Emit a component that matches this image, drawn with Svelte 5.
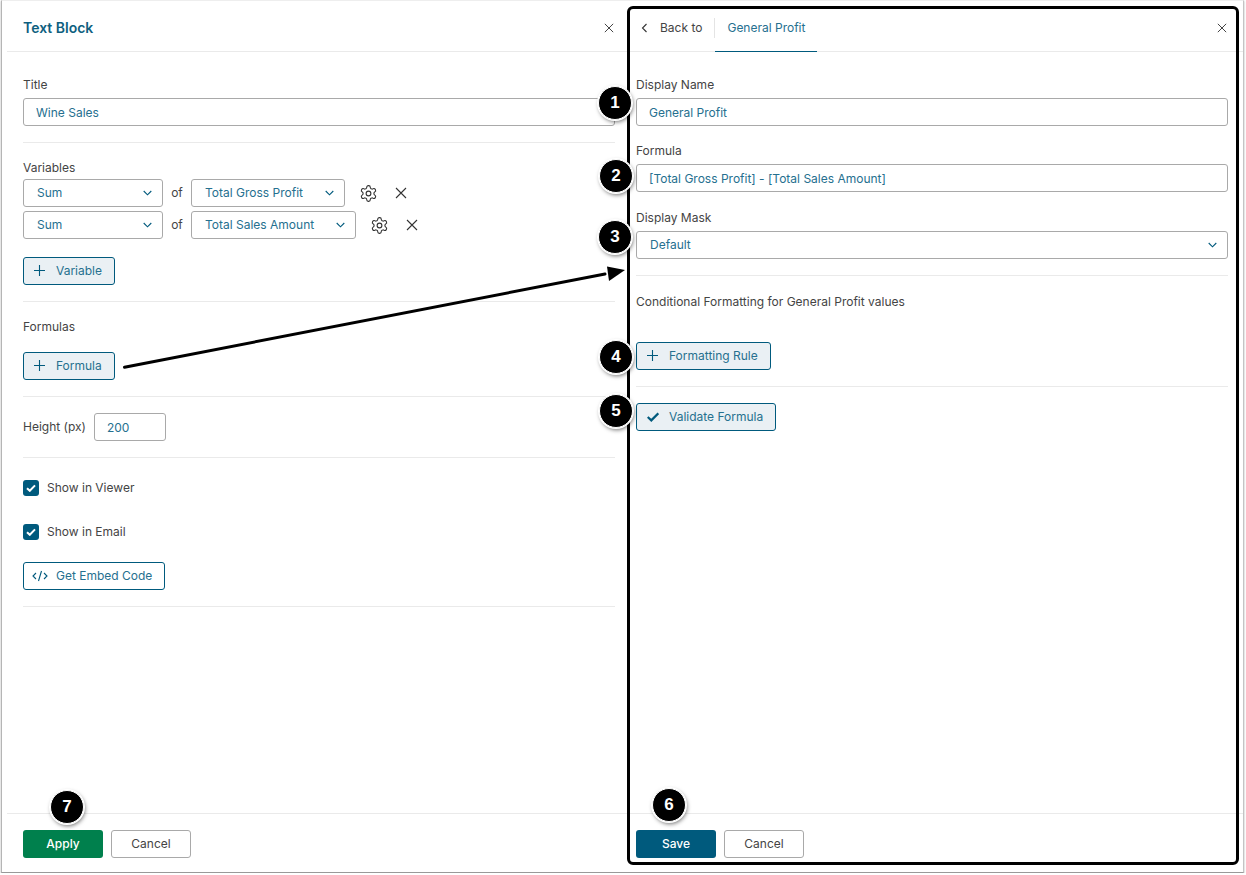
<script>
  const gear = "M12.22 2h-.44a2 2 0 0 0-2 2v.18a2 2 0 0 1-1 1.73l-.43.25a2 2 0 0 1-2 0l-.15-.08a2 2 0 0 0-2.73.73l-.22.38a2 2 0 0 0 .73 2.73l.15.1a2 2 0 0 1 1 1.72v.51a2 2 0 0 1-1 1.74l-.15.09a2 2 0 0 0-.73 2.73l.22.38a2 2 0 0 0 2.73.73l.15-.08a2 2 0 0 1 2 0l.43.25a2 2 0 0 1 1 1.73V20a2 2 0 0 0 2 2h.44a2 2 0 0 0 2-2v-.18a2 2 0 0 1 1-1.73l.43-.25a2 2 0 0 1 2 0l.15.08a2 2 0 0 0 2.73-.73l.22-.39a2 2 0 0 0-.73-2.73l-.15-.08a2 2 0 0 1-1-1.74v-.5a2 2 0 0 1 1-1.74l.15-.09a2 2 0 0 0 .73-2.73l-.22-.38a2 2 0 0 0-2.73-.73l-.15.08a2 2 0 0 1-2 0l-.43-.25a2 2 0 0 1-1-1.73V4a2 2 0 0 0-2-2z";

  const variables = [
    { field: "Total Gross Profit", width: 154 },
    { field: "Total Sales Amount", width: 165 }
  ];

  const badges = [
    { n: 1, x: 615, y: 102 },
    { n: 2, x: 616, y: 175 },
    { n: 3, x: 615, y: 236 },
    { n: 4, x: 616, y: 356 },
    { n: 5, x: 616, y: 410 },
    { n: 6, x: 669, y: 804 },
    { n: 7, x: 67, y: 806 }
  ];
</script>

{#snippet chevron()}
  <svg class="chev" width="9" height="6" viewBox="0 0 9 6"><path d="M0.7 1l3.8 3.8L8.300 1" fill="none" stroke="#005a7d" stroke-width="1.100"/></svg>
{/snippet}

{#snippet close(size)}
  <svg width={size} height={size} viewBox="0 0 12 12"><path d="M1 1l10 10M11 1L1 11" fill="none" stroke="#333" stroke-width="1.1"/></svg>
{/snippet}

{#snippet plus()}
  <svg class="btn-icon" width="11" height="11" viewBox="0 0 11 11"><path d="M5.500 0v11M0 5.500h11" fill="none" stroke="#005a7d" stroke-width="1.1"/></svg>
{/snippet}

{#snippet tick()}
  <svg class="tick" width="10" height="8" viewBox="0 0 10 8"><path d="M1 4.2l2.8 2.6L9 1.4" fill="none" stroke="#fff" stroke-width="2"/></svg>
{/snippet}

<div class="page">
  <div class="panel left">
    <header class="head">
      <h1>Text Block</h1>
      <span class="x">{@render close(10)}</span>
    </header>

    <div class="body">
      <section class="first">
        <label class="lab" for="title">Title</label>
        <input id="title" class="field" value="Wine Sales" readonly />
      </section>

      <section class="vars">
        <div class="lab">Variables</div>
        {#each variables as v}
          <div class="var-row">
            <div class="select sum">Sum {@render chevron()}</div>
            <span class="of">of</span>
            <div class="select" style="width: {v.width}px">{v.field} {@render chevron()}</div>
            <svg class="gear" width="19" height="19" viewBox="0 0 24 24" fill="none" stroke="#333" stroke-width="1.4"><path d={gear}/><circle cx="12" cy="12" r="3"/></svg>
            <span class="var-x">{@render close(12)}</span>
          </div>
        {/each}
        <button class="btn tinted add-var">{@render plus()} Variable</button>
      </section>

      <section class="formulas">
        <div class="lab">Formulas</div>
        <button class="btn tinted">{@render plus()} Formula</button>
      </section>

      <section class="height">
        <label class="lab" for="h">Height (px)</label>
        <input id="h" class="field small" value="200" readonly />
      </section>

      <section class="checks">
        <div class="check"><span class="box">{@render tick()}</span> Show in Viewer</div>
        <div class="check"><span class="box">{@render tick()}</span> Show in Email</div>
        <button class="btn plain">
          <svg class="btn-icon code" width="16" height="12" viewBox="0 0 16 12"><path d="M4 3L1 6l3 3M12 3l3 3-3 3M9.5 1L6.5 11" fill="none" stroke="#005a7d" stroke-width="1.1"/></svg>
          Get Embed Code
        </button>
      </section>
    </div>

    <footer class="foot">
      <button class="btn-solid green">Apply</button>
      <button class="btn-cancel">Cancel</button>
    </footer>
  </div>

  <div class="panel right">
    <header class="head tabs">
      <svg class="back" width="7" height="10" viewBox="0 0 7 10"><path d="M5.5 1l-4 4 4 4" fill="none" stroke="#333" stroke-width="1.1"/></svg>
      <span class="back-to">Back to</span>
      <span class="tab">General Profit</span>
      <span class="x">{@render close(10)}</span>
    </header>

    <div class="body">
      <section class="first">
        <label class="lab" for="dn">Display Name</label>
        <input id="dn" class="field" value="General Profit" readonly />
        <label class="lab next" for="fm">Formula</label>
        <input id="fm" class="field" value="[Total Gross Profit] - [Total Sales Amount]" readonly />
        <div class="lab next mask">Display Mask</div>
        <div class="select full">Default {@render chevron()}</div>
      </section>

      <section class="cond">
        <div class="lab">Conditional Formatting for General Profit values</div>
        <button class="btn tinted">{@render plus()} Formatting Rule</button>
      </section>

      <section class="validate">
        <button class="btn tinted">
          <svg class="btn-icon check-icon" width="12" height="10" viewBox="0 0 12 10"><path d="M0.7 5l3.6 3.4L11.300 1.400" fill="none" stroke="#005a7d" stroke-width="2.2"/></svg>
          Validate Formula
        </button>
      </section>
    </div>

    <footer class="foot">
      <button class="btn-solid blue">Save</button>
      <button class="btn-cancel">Cancel</button>
    </footer>
  </div>

  <!-- annotations drawn over the screenshot -->
  <div class="outline"></div>
  <svg class="arrow" width="1246" height="875" viewBox="0 0 1246 875">
    <path d="M124.500 367.200L605 274" fill="none" stroke="#000" stroke-width="3" stroke-linecap="round"/>
    <path d="M625 270L607 266.500L609 281z" fill="#000"/>
  </svg>
  {#each badges as b}
    <div class="badge" style="left: {b.x - 17}px; top: {b.y - 17}px">{b.n}</div>
  {/each}
</div>

<style>
  :global(body) { margin: 0; background: #fff; }

  .page {
    position: relative;
    display: grid;
    grid-template-columns: 624px 1fr;
    width: 1243px;
    height: 873px;
    margin-left: 1px;
    padding-left: 5px;
    box-sizing: border-box;
    background: #fff;
    border-top: 1px solid #eee;
    border-left: 1px solid #b5b5b5;
    border-right: 1px solid #c4c4c4;
    border-bottom: 1px solid #999;
    box-shadow: 0 1px 2px rgba(0, 0, 0, 0.3);
    font-family: Inter, "Liberation Sans", sans-serif;
    font-size: 12px;
    color: #444;
  }

  .panel { display: flex; flex-direction: column; min-width: 0; height: 871px; }
  .left { padding: 0 16px; }
  .right { padding: 0 15px 0 5px; }

  .head {
    display: flex;
    align-items: center;
    height: 47px;
    margin: 0 -16px;
    padding: 3px 16px 0;
    border-bottom: 1px solid #eaeaea;
    flex: none;
    box-sizing: content-box;
  }
  .right .head { margin: 0 -15px 0 -5px; padding: 3px 15px 0 5px; }
  h1 { margin: 0; font-size: 14px; font-weight: 600; color: #0f5f80; }
  .x { margin-left: auto; display: flex; margin-right: 1px; }

  .tabs { position: relative; }
  .back { margin-left: 5px; }
  .back-to { margin-left: 12px; color: #444; padding-right: 12px; border-right: 1px solid #e4e4e4; line-height: 20px; }
  .tab {
    align-self: stretch;
    display: flex;
    align-items: center;
    padding: 0 12px;
    margin-bottom: -1px;
    color: #26708f;
    border-bottom: 1px solid #005a7d;
  }

  .body { flex: 1; min-height: 0; }
  section { border-bottom: 1px solid #eaeaea; }
  .lab { display: block; line-height: 16px; color: #444; }
  .first { padding: 25px 0 16px; }
  .first .lab { margin-bottom: 5px; }
  .first .next { margin-top: 17px; }
  .first .mask { margin-top: 18px; }
  .vars { padding: 17px 0 16px; }
  .vars .lab { margin-bottom: 3px; }
  .formulas { padding: 17px 0 16px; }
  .formulas .lab { margin-bottom: 17px; }
  .height { display: flex; align-items: center; gap: 8px; padding: 16px 0; }
  .checks { padding: 22px 0 16px; }
  .cond { padding: 18px 0 16px; }
  .cond .lab { margin-bottom: 32px; }
  .validate { border-bottom: none; padding-top: 16px; }

  .field, .select {
    box-sizing: border-box;
    height: 28px;
    border: 1px solid #a9a9a9;
    border-radius: 3px;
    background: #fff;
    color: #26708f;
    font: inherit;
  }
  .field { display: block; width: 100%; padding: 0 12px; outline: none; }
  .field.small { width: 72px; }

  .select {
    display: flex;
    align-items: center;
    justify-content: space-between;
    padding: 0 10px 1px 13px;
    white-space: nowrap;
  }
  .sum { width: 140px; }
  .full { width: 100%; }
  .chev { flex: none; margin-top: 1px; }

  .var-row { display: flex; align-items: center; margin-bottom: 4px; }
  .of { width: 28px; text-align: center; color: #444; margin-top: -1px; }
  .gear { margin-left: 14px; flex: none; }
  .var-x { display: flex; margin-left: 17px; }
  .add-var { margin-top: 14px; }

  .btn {
    display: inline-flex;
    align-items: center;
    box-sizing: border-box;
    height: 28px;
    padding: 0 12px 1px 10px;
    border: 1px solid #005a7d;
    border-radius: 3px;
    color: #26708f;
    font: inherit;
  }
  .tinted { background: #eaf0f4; }
  .plain { background: #fff; }
  .btn-icon { margin-right: 11px; flex: none; }
  .check-icon { margin-right: 10px; }
  .code { margin-right: 8px; margin-left: -2px; }

  .check { display: flex; align-items: center; height: 16px; margin-bottom: 28px; color: #444; line-height: 14px; }
  .check:nth-child(2) { margin-bottom: 22px; }
  .box {
    display: flex;
    align-items: center;
    justify-content: center;
    width: 16px;
    height: 16px;
    margin-right: 8px;
    border-radius: 3px;
    background: #005a7d;
  }

  .foot {
    flex: none;
    display: flex;
    gap: 8px;
    height: 59px;
    padding-top: 16px;
    margin: 0 -16px;
    padding-left: 16px;
    box-sizing: border-box;
    border-top: 1px solid #eaeaea;
  }
  .right .foot { margin: 0 -15px 0 -5px; padding-left: 5px; }

  .btn-solid, .btn-cancel {
    width: 80px;
    height: 28px;
    border-radius: 3px;
    font: inherit;
    padding: 0 0 2px;
  }
  .btn-solid { border: none; color: #fff; font-weight: 500; }
  .green { background: #00804d; }
  .blue { background: #005a7d; }
  .btn-cancel { background: #fff; border: 1px solid #a9a9a9; color: #444; }

  .outline {
    position: absolute;
    left: 625px;
    top: 5px;
    width: 606px;
    height: 853px;
    border: 3px solid #000;
    border-radius: 6px;
    pointer-events: none;
  }
  .arrow { position: absolute; left: -2px; top: -1px; pointer-events: none; }
  .badge {
    position: absolute;
    margin: 0 0 0 -2px;
    box-sizing: border-box;
    width: 34px;
    height: 34px;
    border-radius: 50%;
    background: #000;
    color: #fff;
    border: 1px solid #fff;
    box-shadow: 0 0 0 1px #fff, 1px 2px 4px rgba(0, 0, 0, 0.55);
    display: flex;
    align-items: center;
    justify-content: center;
    font-family: "Liberation Sans", sans-serif;
    font-size: 17px;
    font-weight: 700;
  }
</style>
